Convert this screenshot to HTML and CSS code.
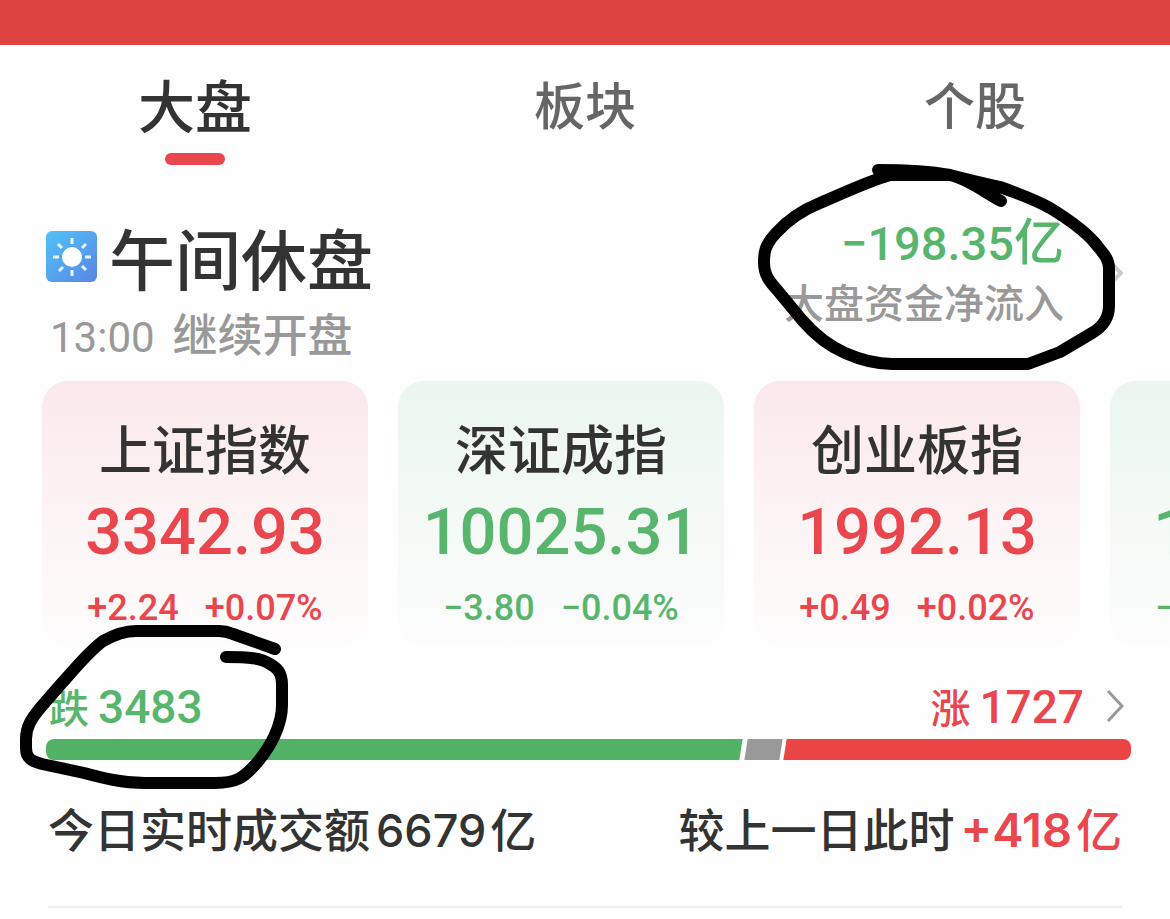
FILE: index.html
```html
<!DOCTYPE html>
<html lang="zh-CN">

<head>
  <meta charset="UTF-8">
  <meta name="viewport" content="width=device-width, initial-scale=1.0">
  <title>大盘</title>
  <link rel="stylesheet" href="styles.css">
</head>

<body>
  <header class="topbar"></header>

  <nav class="tabs">
    <button class="tab active" type="button">大盘</button>
    <button class="tab" type="button">板块</button>
    <button class="tab" type="button">个股</button>
  </nav>

  <main>
    <section class="summary">
      <div class="status">
        <h1>
          <svg class="sun" viewBox="0 0 51 51" aria-hidden="true">
            <defs>
              <linearGradient id="sky" x1="0" y1="0" x2="1" y2="1">
                <stop offset="0" stop-color="#50c2fa" />
                <stop offset="1" stop-color="#5a86e4" />
              </linearGradient>
            </defs>
            <rect width="51" height="51" rx="6" fill="url(#sky)" />
            <circle cx="26" cy="26" r="10" fill="#fff" />
            <path d="M26 7v6M26 39v6M7 26h6M39 26h6M12 13l4 4M36 17l4-4M13 40l4-4M36 35l4 4" stroke="#e6f5ff" stroke-width="3" />
          </svg>
          午间休盘
        </h1>
        <p><span class="num">13:00</span>继续开盘</p>
      </div>
      <a class="flow" href="#flow">
        <span class="flow-value green"><span class="num">−198.35</span>亿</span>
        <span class="flow-label">大盘资金净流入</span>
        <svg class="flow-arrow" viewBox="0 0 20 36" aria-hidden="true">
          <path d="M2 2l16 16L2 34" />
        </svg>
      </a>
      <svg class="mark mark-flow" viewBox="750 160 380 220" aria-hidden="true">
        <path d="M1001 201C984 192 968 179 950 175H890C866 182 844 193 820 203C800 211 787 221 776 233C765 245 764 252 764 262C764 275 769 281 778 291L802 320C815 335 829 346 845 353C861 360 876 364 892 364H1028L1060 352L1092 333C1104 326 1109 317 1109 306V268C1109 258 1102 252 1095 243C1084 230 1068 219 1050 208C1034 199 1017 193 1000 187C982 183 965 179 950 175C928 171 905 170 878 170" />
      </svg>
    </section>

    <section class="cards">
      <a class="card up" href="#sh">
        <h2>上证指数</h2>
        <strong>3342.93</strong>
        <p><span>+2.24</span><span>+0.07%</span></p>
      </a>
      <a class="card down" href="#sz">
        <h2>深证成指</h2>
        <strong>10025.31</strong>
        <p><span>−3.80</span><span>−0.04%</span></p>
      </a>
      <a class="card up" href="#cy">
        <h2>创业板指</h2>
        <strong>1992.13</strong>
        <p><span>+0.49</span><span>+0.02%</span></p>
      </a>
      <a class="card down" href="#kc">
        <h2>科创50</h2>
        <strong>1002.46</strong>
        <p><span>−1.12</span><span>−0.11%</span></p>
      </a>
    </section>

    <section class="breadth">
      <a class="counts" href="#breadth">
        <span class="green">跌<span class="num">3483</span></span>
        <span class="red rise">涨<span class="num">1727</span></span>
        <svg class="arrow" viewBox="0 0 18 34" aria-hidden="true">
          <path d="M2 2l14 15L2 32" />
        </svg>
      </a>
      <div class="bar">
        <span class="bar-down"></span>
        <span class="bar-flat"></span>
        <span class="bar-up"></span>
      </div>
      <svg class="mark mark-fall" viewBox="10 620 290 180" aria-hidden="true">
        <path d="M275 649L233 634Q226 631 219 631H136C124 631 112 636 103 641C87 653 74 670 61 684L41 707C31 719 26 727 26 739V748C26 758 31 761 42 764L84 773C103 778 122 783 145 783H215C237 783 244 777 255 765C270 748 283 725 282 702V685C282 672 277 668 270 664C261 658 249 657 226 657" />
      </svg>
    </section>

    <section class="turnover">
      <p>今日实时成交额<span class="total">6679</span>亿</p>
      <p>较上一日此时<span class="red"><b>+418</b>亿</span></p>
    </section>
  </main>
</body>

</html>
```
FILE: styles.css
```css
* {
  box-sizing: border-box;
}

body,
h1,
h2,
p {
  margin: 0;
}

body {
  background: #fefefe;
  color: #333;
  font-family: "Noto Sans CJK SC", sans-serif;
  font-weight: 500;
  overflow-x: hidden;
}

a {
  color: inherit;
  text-decoration: none;
}

.num,
.card strong,
.card p {
  font-family: Roboto, sans-serif;
  font-weight: 500;
}

.num {
  line-height: 1;
}

.green {
  color: #58b66c;
}

.red {
  color: #ea464e;
}

.topbar {
  height: 45px;
  background: #dd4441;
}

.tabs {
  display: grid;
  grid-template-columns: repeat(3, 1fr);
  height: 120px;
}

.tab {
  display: flex;
  flex-direction: column;
  align-items: center;
  justify-content: space-between;
  padding: 28px 0 0;
  border: 0;
  background: none;
  color: #666;
  font: inherit;
  font-size: 51px;
  line-height: 60px;
}

.tab.active {
  color: #333;
  font-size: 57px;
}

.tab.active::after {
  content: "";
  width: 60px;
  height: 12px;
  border-radius: 6px;
  background: #ea464e;
}

.summary {
  position: relative;
  display: flex;
  justify-content: space-between;
  padding: 48px 106px 22px 46px;
}

.status h1 {
  display: flex;
  align-items: center;
  gap: 12px;
  margin-top: 8px;
  font-size: 66px;
  font-weight: 500;
  line-height: 70px;
}

.sun {
  width: 51px;
  height: 51px;
}

.status p {
  margin-top: 17px;
  padding-left: 4px;
  color: #999;
  font-size: 45px;
  line-height: 50px;
}

.status .num {
  margin-right: 18px;
  font-size: 42px;
  font-weight: 400;
}

.flow {
  display: flex;
  flex-direction: column;
  align-items: flex-end;
}

.flow-value {
  font-size: 50px;
  line-height: 50px;
}

.flow-value .num {
  font-size: 47px;
}

.flow-label {
  margin-top: 14px;
  color: #999;
  font-size: 40px;
  line-height: 40px;
}

.flow-arrow {
  position: absolute;
  top: 90px;
  right: 47px;
  width: 20px;
  height: 36px;
  fill: none;
  stroke: #ccc;
  stroke-width: 4px;
}

/* marker strokes drawn over the content */
.mark {
  position: absolute;
  z-index: 1;
  fill: none;
  stroke: #000;
  stroke-width: 12px;
  stroke-linecap: round;
  stroke-linejoin: round;
  pointer-events: none;
}

.mark-flow {
  top: -5px;
  right: 40px;
  width: 380px;
  height: 220px;
}

.mark-fall {
  top: -26px;
  left: 10px;
  width: 290px;
  height: 180px;
}

.cards {
  display: flex;
  gap: 30px;
  padding-left: 42px;
  overflow: hidden;
}

.card {
  flex: 0 0 326px;
  padding: 36px 0 18px;
  border-radius: 26px;
  text-align: center;
}

.card h2 {
  font-size: 53px;
  font-weight: 500;
  line-height: 60px;
}

.card strong {
  display: block;
  margin-top: 15px;
  font-size: 65px;
  line-height: 80px;
}

.card p {
  display: flex;
  justify-content: center;
  gap: 26px;
  margin-top: 16px;
  font-size: 36px;
  line-height: 40px;
}

.up {
  background: linear-gradient(#fbe9ea, #fefdfd);
}

.down {
  background: linear-gradient(#eaf6ee, #fdfdfd);
}

.up strong,
.up p {
  color: #ea464e;
}

.down strong,
.down p {
  color: #58b66c;
}

.breadth {
  position: relative;
  padding: 35px 39px 0 46px;
}

.counts {
  display: flex;
  align-items: center;
  padding: 0 7px 0 3px;
  font-size: 40px;
  line-height: 50px;
}

.counts .num {
  margin-left: 9px;
  font-size: 46px;
}

.rise {
  margin-left: auto;
}

.arrow {
  width: 18px;
  height: 34px;
  margin-left: 22px;
  fill: none;
  stroke: #999;
  stroke-width: 3px;
}

.bar {
  display: flex;
  height: 21px;
  margin-top: 8px;
  border-radius: 8px;
  overflow: hidden;
}

.bar span {
  transform: skewX(-9deg);
}

.bar-down {
  flex: 3483;
  margin-left: -4px;
  background: #52b265;
}

.bar-flat {
  flex: 172;
  margin: 0 5px;
  background: #999;
}

.bar-up {
  flex: 1742;
  margin-right: -4px;
  background: #ec4545;
}

.turnover {
  display: flex;
  justify-content: space-between;
  margin: 0 48px;
  padding: 38px 0 50px;
  border-bottom: 2px solid #eee;
  font-size: 46px;
  line-height: 58px;
}

.total,
.turnover b {
  margin: 0 4px 0 6px;
  font-family: Inter, sans-serif;
  font-size: 45px;
  font-weight: 500;
  line-height: 1;
}

.turnover b {
  font-size: 47px;
  font-weight: 600;
}
```
